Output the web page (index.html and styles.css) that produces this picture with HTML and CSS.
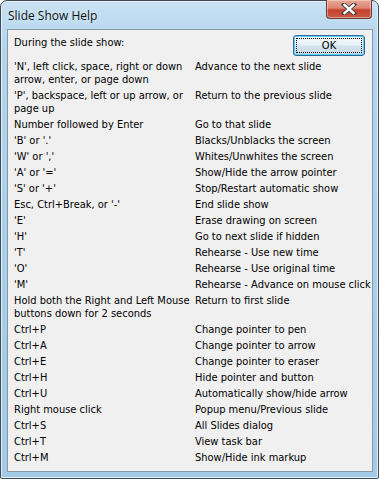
FILE: index.html
```html
<!DOCTYPE html>
<html>
<head>
<meta charset="utf-8">
<link rel="stylesheet" href="styles.css">
</head>
<body>
<div class="window">
  <div class="titlebar">
    <span class="title">Slide Show Help</span>
    <div class="close">
      <svg width="16" height="12" viewBox="0 0 16 12">
        <path d="M3 1.5 L13 10.5 M13 1.5 L3 10.5" stroke="#3a3f45" stroke-width="4.2" stroke-linecap="square"/>
        <path d="M3.5 2 L12.5 10 M12.5 2 L3.5 10" stroke="#ffffff" stroke-width="2.4" stroke-linecap="square"/>
      </svg>
    </div>
  </div>
  <div class="client">
    <div class="header">
      <span class="intro">During the slide show:</span>
      <button class="ok"><span class="focus">OK</span></button>
    </div>
    <div class="keys">
      <div>'N', left click, space, right or down<br>arrow, enter, or page down</div><div>Advance to the next slide</div>
      <div>'P', backspace, left or up arrow, or<br>page up</div><div>Return to the previous slide</div>
      <div>Number followed by Enter</div><div>Go to that slide</div>
      <div>'B' or '.'</div><div>Blacks/Unblacks the screen</div>
      <div>'W' or ','</div><div>Whites/Unwhites the screen</div>
      <div>'A' or '='</div><div>Show/Hide the arrow pointer</div>
      <div>'S' or '+'</div><div>Stop/Restart automatic show</div>
      <div>Esc, Ctrl+Break, or '-'</div><div>End slide show</div>
      <div>'E'</div><div>Erase drawing on screen</div>
      <div>'H'</div><div>Go to next slide if hidden</div>
      <div>'T'</div><div>Rehearse - Use new time</div>
      <div>'O'</div><div>Rehearse - Use original time</div>
      <div>'M'</div><div>Rehearse - Advance on mouse click</div>
      <div>Hold both the Right and Left Mouse<br>buttons down for 2 seconds</div><div>Return to first slide</div>
      <div>Ctrl+P</div><div>Change pointer to pen</div>
      <div>Ctrl+A</div><div>Change pointer to arrow</div>
      <div>Ctrl+E</div><div>Change pointer to eraser</div>
      <div>Ctrl+H</div><div>Hide pointer and button</div>
      <div>Ctrl+U</div><div>Automatically show/hide arrow</div>
      <div>Right mouse click</div><div>Popup menu/Previous slide</div>
      <div>Ctrl+S</div><div>All Slides dialog</div>
      <div>Ctrl+T</div><div>View task bar</div>
      <div>Ctrl+M</div><div>Show/Hide ink markup</div>
    </div>
  </div>
</div>
</body>
</html>
```
FILE: styles.css
```css
html, body {
  margin: 0;
  padding: 0;
  background: #ffffff;
}
.window {
  box-sizing: border-box;
  width: 379px;
  height: 479px;
  border: 1px solid #3f4a55;
  border-radius: 7px 7px 2px 2px;
  background: linear-gradient(180deg, #c9e2f3 0%, #b4d6ee 8%, #a9cfe9 50%, #a3cbe7 100%);
  box-shadow: inset 0 0 0 1px #e4f1fa;
  display: flex;
  flex-direction: column;
}
.titlebar {
  height: 28px;
  display: flex;
  align-items: flex-start;
  flex: none;
}
.title {
  font-family: "Open Sans", "Noto Sans", sans-serif;
  font-size: 12px;
  color: #111;
  margin-left: 7px;
  margin-top: 6px;
  line-height: 17px;
  text-shadow: 0 0 6px #e6f3fb;
}
.close {
  margin-left: auto;
  margin-right: 6px;
  margin-top: -1px;
  width: 44px;
  height: 18px;
  border: 1px solid #6b3a33;
  border-top: none;
  border-radius: 0 0 4px 4px;
  background: linear-gradient(180deg, #e9a899 0%, #dc8572 45%, #c4412c 55%, #c85a45 100%);
  box-shadow: inset 0 0 0 1px rgba(255, 220, 210, 0.5);
  display: flex;
  align-items: center;
  justify-content: center;
}
.close svg {
  display: block;
}
.client {
  flex: 1;
  margin: 0 5px 6px 6px;
  border: 1px solid #8a96a2;
  background: #f0f0f0;
  padding: 5px 7px 0 6px;
  font-family: "DejaVu Sans Condensed", "DejaVu Sans", sans-serif;
  font-size: 11px;
  line-height: 13px;
  color: #000;
}
.header {
  display: flex;
  align-items: flex-start;
  justify-content: space-between;
  height: 21px;
}
.intro {
  margin-top: 1px;
}
.ok {
  box-sizing: border-box;
  width: 72px;
  height: 21px;
  padding: 2px;
  margin: 0;
  border: 1px solid #2f6c9c;
  border-radius: 3px;
  background: linear-gradient(180deg, #f3f9fc 0%, #e7f1f6 48%, #d4e3ec 52%, #c8dbe6 100%);
  box-shadow: inset 0 0 0 1px #5ecdf3;
  font-family: "DejaVu Sans Condensed", "DejaVu Sans", sans-serif;
  font-size: 11px;
  color: #000;
  display: flex;
}
.focus {
  flex: 1;
  border: 1px dotted #000;
  line-height: 13px;
  text-align: center;
}
.keys {
  margin-top: 4px;
  display: grid;
  grid-template-columns: 181px auto;
  row-gap: 3px;
  white-space: nowrap;
}
```
